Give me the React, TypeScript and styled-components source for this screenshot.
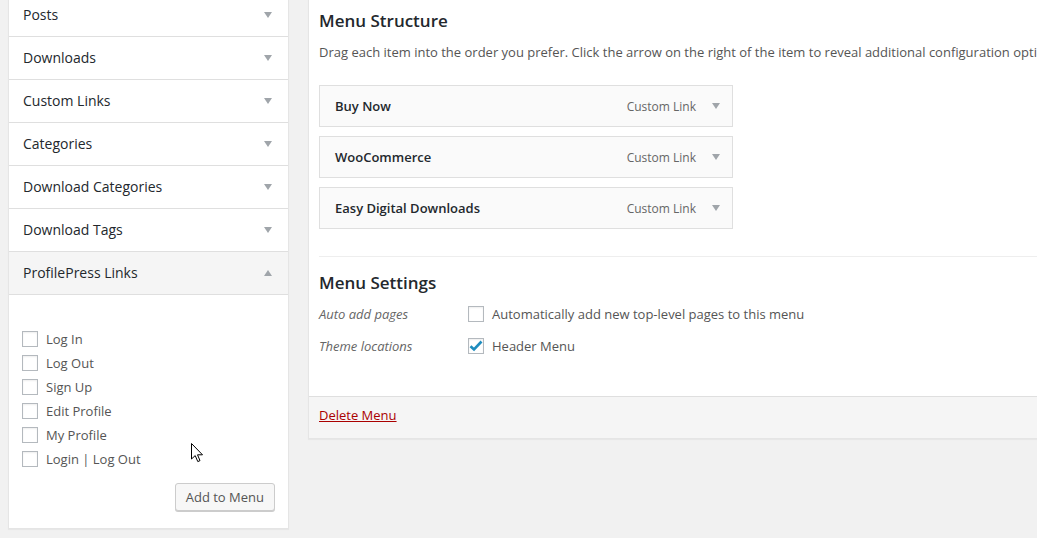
import React from "react";
import styled, { createGlobalStyle } from "styled-components";

const Global = createGlobalStyle`
  html, body { margin: 0; padding: 0; background: #f1f1f1; }
  body { font-family: "Open Sans", "Liberation Sans", sans-serif; font-size: 13px; color: #444; overflow: hidden; }
  * { box-sizing: border-box; }
`;

const Page = styled.div`
  width: 1037px;
  height: 538px;
  overflow: hidden;
  position: relative;
  display: flex;
  align-items: flex-start;
  gap: 19px;
  padding-left: 8px;
  margin-top: -7px;
`;

const Sidebar = styled.div`
  flex: 0 0 281px;
  background: #fff;
  border: 1px solid #e5e5e5;
  box-shadow: 0 1px 1px rgba(0, 0, 0, 0.04);
`;

const Section = styled.div`
  border-bottom: 1px solid #dfdfdf;
  &:last-child { border-bottom: none; }
`;

const SectionHeader = styled.div<{ $open?: boolean }>`
  display: flex;
  align-items: center;
  justify-content: space-between;
  padding: 0 16px 1px 14px;
  font-size: 14px;
  font-weight: 500;
  color: #23282d;
  background: ${(p) => (p.$open ? "#f5f5f5" : "#fff")};
  border-bottom: ${(p) => (p.$open ? "1px solid #dfdfdf" : "none")};
  height: ${(p) => (p.$open ? "43px" : "42px")};
`;

const SectionBody = styled.div`
  padding: 32px 14px 17px 13px;
  display: flex;
  flex-direction: column;
`;

const CheckList = styled.ul`
  list-style: none;
  margin: 0;
  padding: 0;
`;

const CheckRow = styled.li`
  height: 24px;
  display: flex;
  align-items: center;
  gap: 8px;
  color: #555;
  font-size: 13px;
`;

const Box = styled.span`
  width: 16px;
  height: 16px;
  flex: 0 0 16px;
  border: 1px solid #b4b9be;
  background: #fff;
  box-shadow: inset 0 1px 2px rgba(0, 0, 0, 0.07);
  display: inline-flex;
  align-items: center;
  justify-content: center;
`;

const Button = styled.button`
  align-self: flex-end;
  margin-top: 12px;
  margin-right: -1px;
  height: 28px;
  padding: 0 10px;
  font-family: inherit;
  font-size: 13px;
  color: #555;
  background: #f7f7f7;
  border: 1px solid #ccc;
  border-radius: 3px;
  box-shadow: 0 1px 0 #ccc;
  white-space: nowrap;
`;

const Panel = styled.div`
  flex: 0 0 820px;
  background: #fff;
  border: 1px solid #e5e5e5;
  box-shadow: 0 1px 1px rgba(0, 0, 0, 0.04);
`;

const PanelBody = styled.div`
  padding: 15px 10px 0 10px;
`;

const Heading = styled.h3`
  margin: 0;
  font-size: 17px;
  line-height: 24px;
  font-weight: 600;
  color: #23282d;
`;

const Desc = styled.p`
  margin: 9px 0 0;
  line-height: 20px;
  color: #555;
  white-space: nowrap;
`;

const Items = styled.div`
  margin-top: 23px;
  display: flex;
  flex-direction: column;
  gap: 9px;
`;

const Item = styled.div`
  width: 414px;
  height: 42px;
  background: #fafafa;
  border: 1px solid #dfdfdf;
  display: flex;
  align-items: center;
  padding: 0 12px 0 15px;
`;

const ItemTitle = styled.span`
  flex: 1;
  font-weight: 600;
  font-size: 13px;
  color: #23282d;
`;

const ItemType = styled.span`
  font-size: 12px;
  color: #666;
  margin-right: 16px;
`;

const Separator = styled.div`
  margin-top: 27px;
  border-top: 1px solid #eee;
  padding-top: 14px;
`;

const SettingsGrid = styled.div`
  display: grid;
  grid-template-columns: 149px 1fr;
  grid-auto-rows: 32px;
  align-items: center;
  margin-top: 3px;
  padding-bottom: 34px;
`;

const SettingLabel = styled.span`
  font-style: italic;
  color: #666;
  font-size: 13px;
`;

const SettingValue = styled.span`
  display: flex;
  align-items: center;
  gap: 8px;
  color: #555;
`;

const Footer = styled.div`
  border-top: 1px solid #dfdfdf;
  background: #f5f5f5;
  height: 42px;
  display: flex;
  align-items: center;
  padding: 0 10px 5px;
`;

const DeleteLink = styled.a`
  color: #a00;
  text-decoration: underline;
  font-size: 13px;
  cursor: pointer;
`;

const Cursor = styled.svg`
  position: absolute;
  left: 191px;
  top: 450px;
`;

const Arrow = ({ up }: { up?: boolean }) => (
  <svg width="8" height="6" viewBox="0 0 8 6" style={{ display: "block" }}>
    <path d={up ? "M0 6 L8 6 L4 0 Z" : "M0 0 L8 0 L4 6 Z"} fill="#a0a5aa" />
  </svg>
);

const Check = () => (
  <svg width="14" height="12" viewBox="0 0 14 12">
    <path d="M1.5 6.2 L5 9.5 L12.5 1.5" stroke="#1e8cbe" strokeWidth="2.6" fill="none" strokeLinecap="butt" />
  </svg>
);

const sections = ["Posts", "Downloads", "Custom Links", "Categories", "Download Categories", "Download Tags"];
const links = ["Log In", "Log Out", "Sign Up", "Edit Profile", "My Profile", "Login | Log Out"];
const menuItems = ["Buy Now", "WooCommerce", "Easy Digital Downloads"];

export default function App() {
  return (
    <>
      <Global />
      <Page>
        <Sidebar>
          {sections.map((s) => (
            <Section key={s}>
              <SectionHeader>
                <span>{s}</span>
                <Arrow />
              </SectionHeader>
            </Section>
          ))}
          <Section>
            <SectionHeader $open>
              <span>ProfilePress Links</span>
              <Arrow up />
            </SectionHeader>
            <SectionBody>
              <CheckList>
                {links.map((l) => (
                  <CheckRow key={l}>
                    <Box />
                    <span>{l}</span>
                  </CheckRow>
                ))}
              </CheckList>
              <Button>Add to Menu</Button>
            </SectionBody>
          </Section>
        </Sidebar>
        <Panel>
          <PanelBody>
            <Heading>Menu Structure</Heading>
            <Desc>
              Drag each item into the order you prefer. Click the arrow on the right of the item to reveal additional configuration options.
            </Desc>
            <Items>
              {menuItems.map((m) => (
                <Item key={m}>
                  <ItemTitle>{m}</ItemTitle>
                  <ItemType>Custom Link</ItemType>
                  <Arrow />
                </Item>
              ))}
            </Items>
            <Separator>
              <Heading>Menu Settings</Heading>
              <SettingsGrid>
                <SettingLabel>Auto add pages</SettingLabel>
                <SettingValue>
                  <Box />
                  <span>Automatically add new top-level pages to this menu</span>
                </SettingValue>
                <SettingLabel>Theme locations</SettingLabel>
                <SettingValue>
                  <Box>
                    <Check />
                  </Box>
                  <span>Header Menu</span>
                </SettingValue>
              </SettingsGrid>
            </Separator>
          </PanelBody>
          <Footer>
            <DeleteLink>Delete Menu</DeleteLink>
          </Footer>
        </Panel>
        <Cursor width="13" height="20" viewBox="0 0 13 20">
          <path d="M0.5 0.5 L0.5 16 L4.2 12.6 L6.8 18.6 L9 17.6 L6.5 11.8 L11.5 11.8 Z" fill="#fff" stroke="#000" strokeWidth="1" strokeLinejoin="round" />
        </Cursor>
      </Page>
    </>
  );
}
